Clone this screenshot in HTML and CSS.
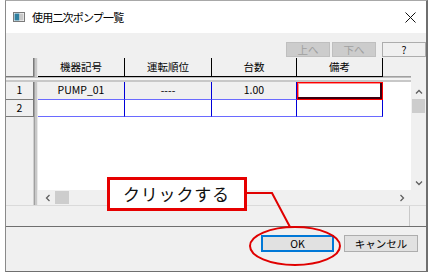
FILE: index.html
```html
<!DOCTYPE html>
<html lang="ja">
<head>
<meta charset="utf-8">
<link rel="stylesheet" href="styles.css">
</head>
<body>
<div class="dialog">
  <div class="titlebar">
    <svg class="appicon" width="12" height="10" viewBox="0 0 12 10">
      <rect x="0.5" y="0.5" width="11" height="9" fill="#fff" stroke="#7a7a7a"/>
      <rect x="1.5" y="1.5" width="5" height="7" fill="#2f7f9f"/>
      <rect x="6.5" y="1.5" width="4" height="7" fill="#c8c8c8"/>
    </svg>
    <span class="title">使用二次ポンプ一覧</span>
    <svg class="close" width="11" height="11" viewBox="0 0 11 11">
      <path d="M0.5 0.5 L10.5 10.5 M10.5 0.5 L0.5 10.5" stroke="#111" stroke-width="1"/>
    </svg>
  </div>
  <div class="toolbar">
    <button class="tb dis">上へ</button>
    <button class="tb dis">下へ</button>
    <button class="tb help">?</button>
  </div>
  <div class="gridarea">
    <div class="gridleft">
      <div class="grid">
        <div class="c rh hd"></div>
        <div class="c vsplit"></div>
        <div class="c ch">機器記号</div>
        <div class="c ch">運転順位</div>
        <div class="c ch">台数</div>
        <div class="c ch">備考</div>
        <div class="c chx"></div>

        <div class="hsplit"></div>

        <div class="c rh">1</div>
        <div class="c vsplit"></div>
        <div class="c d ro">PUMP_01</div>
        <div class="c d ro">----</div>
        <div class="c d ro">1.00</div>
        <div class="c d sel"></div>
        <div class="c ex"></div>

        <div class="c rh">2</div>
        <div class="c vsplit"></div>
        <div class="c d"></div>
        <div class="c d"></div>
        <div class="c d"></div>
        <div class="c d"></div>
        <div class="c ex"></div>

        <div class="c rh fill"></div>
        <div class="c vsplit"></div>
        <div class="c blank"></div>
      </div>
      <div class="hscrollrow">
        <div class="rhfill"></div>
        <div class="vsplit"></div>
        <div class="hscroll">
          <svg class="arr" width="6" height="8" viewBox="0 0 6 8"><path d="M4.5 1 L1.5 4 L4.5 7" fill="none" stroke="#606060" stroke-width="1.3"/></svg>
          <div class="hthumb"></div>
          <div class="sp"></div>
          <svg class="arr" width="6" height="8" viewBox="0 0 6 8"><path d="M1.5 1 L4.5 4 L1.5 7" fill="none" stroke="#606060" stroke-width="1.3"/></svg>
        </div>
      </div>
    </div>
    <div class="vcol">
      <div class="vtop"></div>
      <div class="vscroll">
        <svg class="arr" width="8" height="6" viewBox="0 0 8 6"><path d="M1 4.5 L4 1.5 L7 4.5" fill="none" stroke="#606060" stroke-width="1.3"/></svg>
        <div class="vthumb"></div>
        <div class="sp"></div>
        <svg class="arr" width="8" height="6" viewBox="0 0 8 6"><path d="M1 1.5 L4 4.5 L7 1.5" fill="none" stroke="#606060" stroke-width="1.3"/></svg>
      </div>
      <div class="corner"></div>
    </div>
  </div>
  <div class="status">
    <div class="stl"></div>
    <div class="str"></div>
  </div>
  <div class="footer">
    <button class="btn ok">OK</button>
    <button class="btn">キャンセル</button>
  </div>
</div>
<div class="callout">クリックする</div>
<svg class="annot" width="443" height="275" viewBox="0 0 443 275">
  <path d="M247 193 L272 193 L290 227" fill="none" stroke="#e00000" stroke-width="2"/>
  <ellipse cx="295" cy="246" rx="45" ry="19" fill="none" stroke="#e00000" stroke-width="2"/>
</svg>
</body>
</html>
```
FILE: styles.css
```css
* { box-sizing: border-box; }
html, body { margin: 0; padding: 0; background: #fff; }
body {
  width: 443px; height: 275px; overflow: hidden; position: relative;
  font-family: "Noto Sans CJK JP", "Noto Sans", sans-serif;
  font-size: 10.5px; color: #000;
}
.dialog {
  margin-left: 5px;
  width: 423px; height: 272px;
  border-top: 1px solid #a8a8a8;
  border-left: 1px solid #8a8a8a;
  border-right: 2px solid #6f6f6f;
  border-bottom: 1px solid #6f6f6f;
  background: #f0f0f0;
  display: flex; flex-direction: column;
}
.titlebar {
  height: 32px; background: #fff;
  display: flex; align-items: center;
  padding-left: 7px; padding-right: 10px;
}
.appicon { display: block; margin-right: 7px; }
.title { font-size: 11px; letter-spacing: -0.8px; flex: 1; }
.close { display: block; }
.toolbar {
  height: 25px; display: flex; justify-content: flex-end; align-items: flex-start;
  padding-top: 9px; padding-right: 0;
}
.tb {
  flex: none;
  width: 44px; height: 15px; margin: 0 0 0 2px; padding: 0;
  font-family: inherit; font-size: 10.5px; line-height: 13px;
  border: 1px solid #adadad; background: #e1e1e1;
}
.tb.dis { background: #cccccc; border-color: #bfbfbf; color: #a0a0a0; }
.tb.help { margin-left: 6px; background: #f0f0f0; border-color: #adadad; }

.gridarea { height: 147px; display: flex; }
.gridleft { width: 405px; display: flex; flex-direction: column; }
.grid {
  height: 132px;
  display: grid;
  grid-template-columns: 28px 4px 87px 87px 85px 86px 28px;
  grid-template-rows: 19px 5px 18px 17px 1fr;
  background: #fff;
}
.c { display: flex; align-items: center; justify-content: center; line-height: 1; }
.rh { background: #f0f0f0; border-right: 1px solid #7a7a7a; border-bottom: 1px solid #7a7a7a; }
.rh.fill { border: none; border-right: 1px solid #d0d0d0; }
.vsplit { background: #c8c8c8; border-left: 1px solid #a0a0a0; border-right: 1px solid #e8e8e8; }
.ch { background: #f0f0f0; border-right: 1px solid #000; border-bottom: 1px solid #000; }
.chx { background: #f0f0f0; border-bottom: 1px solid #a0a0a0; }
.hsplit {
  grid-column: 1 / -1;
  background: #f4f4f4;
  border-top: 1px solid #c0c0c0; border-bottom: 2px solid #c8c8c8;
}
.d { border-right: 1px solid #0000d8; border-bottom: 1px solid #6a6aff; background: #fff; }
.d.ro { background: #f0f0f0; }
.d.sel { border: 1px solid #ff0000; box-shadow: inset -2px -2px 0 #3a0010, inset 1px 1px 0 #ff9090; }
.ex { background: #fff; }
.blank { grid-column: 3 / -1; background: #fff; }

.hscrollrow { height: 15px; display: flex; }
.rhfill { width: 28px; background: #f0f0f0; border-right: 1px solid #d0d0d0; }
.hscrollrow .vsplit { width: 4px; }
.hscroll { flex: 1; background: #f0f0f0; display: flex; align-items: center; padding: 0 6px 0 7px; }
.hscroll .arr { display: block; }
.hthumb { width: 14px; height: 13px; background: #cdcdcd; margin-left: 4px; }
.sp { flex: 1; }

.vcol { width: 15px; display: flex; flex-direction: column; }
.vtop { height: 24px; background: #f0f0f0; }
.vscroll { flex: 1; background: #f0f0f0; display: flex; flex-direction: column; align-items: center; padding: 7px 0 4px; }
.vscroll .arr { display: block; }
.vthumb { width: 13px; height: 14px; background: #cdcdcd; margin-top: 4px; }
.corner { height: 15px; background: #f0f0f0; }

.status {
  height: 22px; display: flex;
  border-top: 1px solid #dadada;
  border-bottom: 1px solid #6f6f6f;
}
.stl { width: 404px; border-right: 1px solid #c8c8c8; }
.str { flex: 1; }

.footer {
  flex: 1; display: flex; justify-content: flex-end; align-items: flex-start;
  padding-top: 8px; padding-right: 8px;
}
.btn {
  flex: none;
  width: 74px; height: 17px; margin-left: 10px; padding: 0;
  font-family: inherit; font-size: 10.5px; line-height: 13px;
  background: #e1e1e1; border: 1px solid #adadad; color: #000;
}
.btn.ok { border: 2px solid #0078d7; width: 73px; }

.callout {
  position: absolute; left: 107px; top: 177px;
  width: 140px; height: 34px;
  border: 3px solid #e60000; background: #fff;
  font-size: 17px; letter-spacing: 0.8px;
  padding-left: 13px; line-height: 28px; color: #111;
}
.annot { position: absolute; left: 0; top: 0; pointer-events: none; }
```
